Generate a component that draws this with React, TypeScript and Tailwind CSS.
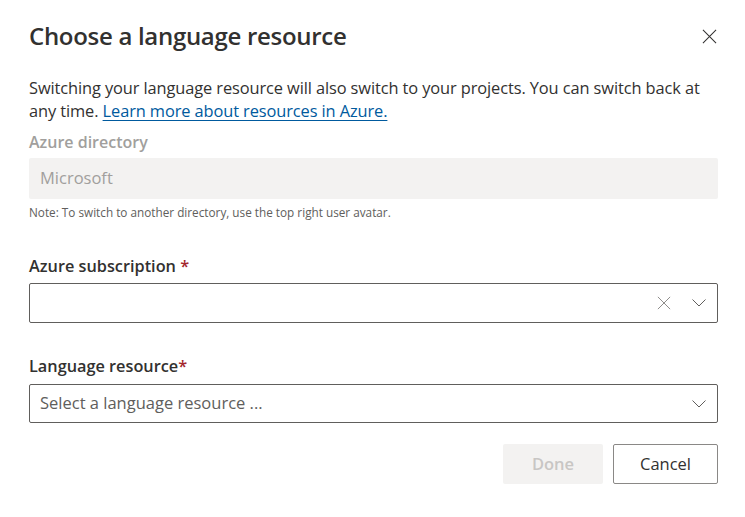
import React from "react";

function CloseIcon({ className }: { className?: string }) {
  return (
    <svg viewBox="0 0 16 16" className={className} fill="none" stroke="currentColor" strokeWidth="1.1">
      <path d="M1 1 L15 15 M15 1 L1 15" />
    </svg>
  );
}

function Chevron({ className }: { className?: string }) {
  return (
    <svg viewBox="0 0 14 8" className={className} fill="none" stroke="currentColor" strokeWidth="1">
      <path d="M0.5 0.5 L7 7 L13.5 0.5" />
    </svg>
  );
}

export default function App() {
  return (
    <div
      className="w-[745px] h-[517px] bg-white text-[#323130] pl-[29px] pr-[27px] pt-[20px]"
      style={{ fontFamily: '"Open Sans", "Noto Sans", sans-serif' }}
    >
      <div className="flex items-center justify-between h-[32px]">
        <h1 className="text-[24px] leading-[32px] font-semibold tracking-[-0.3px]">Choose a language resource</h1>
        <CloseIcon className="w-[15px] h-[15px] text-[#323130] mr-[1px]" />
      </div>

      <p className="mt-[24px] text-[16.4px] leading-[23px] tracking-[-0.1px]">
        Switching your language resource will also switch to your projects. You can switch back at any time.{" "}
        <a className="text-[#005a9e] underline underline-offset-[3px]">Learn more about resources in Azure.</a>
      </p>

      <div className="mt-[6px] pt-[4px] pb-[6px] text-[16px] leading-[20px] font-semibold text-[#a19f9d]">
        Azure directory
      </div>
      <div className="h-[41px] rounded-[2px] bg-[#f3f2f1] flex items-center px-[11px] text-[16.5px] text-[#a19f9d]">
        Microsoft
      </div>
      <div className="mt-[5px] text-[11.75px] leading-[16px] text-[#605e5c]">
        Note: To switch to another directory, use the top right user avatar.
      </div>

      <div className="mt-[32px] pt-[4px] pb-[7px] text-[16.3px] leading-[20px] font-semibold">
        Azure subscription <span className="text-[#a4262c]">*</span>
      </div>
      <div className="h-[40px] rounded-[2px] border border-[#605e5c] flex items-center justify-end">
        <CloseIcon className="w-[14px] h-[14px] text-[#8a8886] mr-[21px]" />
        <Chevron className="w-[14px] h-[8px] text-[#605e5c] mr-[11px]" />
      </div>

      <div className="mt-[30px] pt-[3px] pb-[8px] text-[16.3px] leading-[20px] font-semibold">
        Language resource<span className="text-[#a4262c]">*</span>
      </div>
      <div className="h-[39px] rounded-[2px] border border-[#605e5c] flex items-center justify-between pl-[10px]">
        <span className="text-[16.5px] text-[#605e5c]">Select a language resource ...</span>
        <Chevron className="w-[14px] h-[8px] text-[#605e5c] mr-[11px]" />
      </div>

      <div className="mt-[21px] flex justify-end gap-[10px]">
        <button className="w-[100px] h-[40px] rounded-[2px] bg-[#f3f2f1] text-[#c8c6c4] text-[16.5px] font-semibold">
          Done
        </button>
        <button className="w-[105px] h-[40px] rounded-[2px] border border-[#8a8886] bg-white text-[#323130] text-[16.5px]">
          Cancel
        </button>
      </div>
    </div>
  );
}
